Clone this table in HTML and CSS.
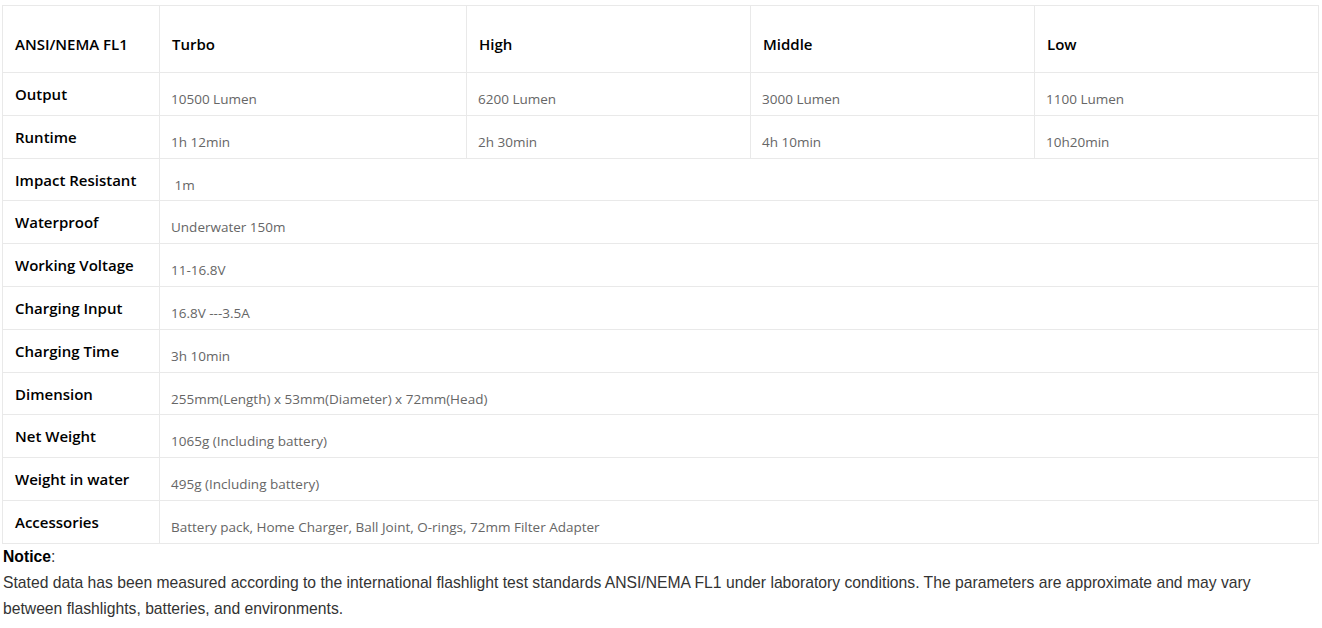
FILE: index.html
```html
<!DOCTYPE html>
<html>
<head>
<meta charset="utf-8">
<link rel="stylesheet" href="styles.css">
</head>
<body>
<div class="page">
  <table class="spec">
    <colgroup>
      <col class="c-label"><col class="c-turbo"><col class="c-mode"><col class="c-mode"><col class="c-mode">
    </colgroup>
    <tr class="head">
      <td class="lbl">ANSI/NEMA FL1</td>
      <td class="lbl">Turbo</td>
      <td class="lbl">High</td>
      <td class="lbl">Middle</td>
      <td class="lbl">Low</td>
    </tr>
    <tr>
      <td class="lbl">Output</td>
      <td class="val">10500 Lumen</td>
      <td class="val">6200 Lumen</td>
      <td class="val">3000 Lumen</td>
      <td class="val">1100 Lumen</td>
    </tr>
    <tr>
      <td class="lbl">Runtime</td>
      <td class="val">1h 12min</td>
      <td class="val">2h 30min</td>
      <td class="val">4h 10min</td>
      <td class="val">10h20min</td>
    </tr>
    <tr>
      <td class="lbl">Impact Resistant</td>
      <td class="val" colspan="4">&nbsp;1m</td>
    </tr>
    <tr>
      <td class="lbl">Waterproof</td>
      <td class="val" colspan="4">Underwater 150m</td>
    </tr>
    <tr>
      <td class="lbl">Working Voltage</td>
      <td class="val" colspan="4">11-16.8V</td>
    </tr>
    <tr>
      <td class="lbl">Charging Input</td>
      <td class="val" colspan="4">16.8V ---3.5A</td>
    </tr>
    <tr>
      <td class="lbl">Charging Time</td>
      <td class="val" colspan="4">3h 10min</td>
    </tr>
    <tr>
      <td class="lbl">Dimension</td>
      <td class="val" colspan="4">255mm(Length) x 53mm(Diameter) x 72mm(Head)</td>
    </tr>
    <tr>
      <td class="lbl">Net Weight</td>
      <td class="val" colspan="4">1065g (Including battery)</td>
    </tr>
    <tr>
      <td class="lbl">Weight in water</td>
      <td class="val" colspan="4">495g (Including battery)</td>
    </tr>
    <tr>
      <td class="lbl">Accessories</td>
      <td class="val" colspan="4">Battery pack, Home Charger, Ball Joint, O-rings, 72mm Filter Adapter</td>
    </tr>
  </table>
  <div class="notice">
    <p><strong>Notice</strong>:</p>
    <p>Stated data has been measured according to the international flashlight test standards ANSI/NEMA FL1 under laboratory conditions. The parameters are approximate and may vary between flashlights, batteries, and environments.</p>
  </div>
</div>
</body>
</html>
```
FILE: styles.css
```css
html, body {
  margin: 0;
  padding: 0;
  background: #fff;
}
.page {
  padding: 5px 0 0 2px;
  width: 1317px;
}
.spec {
  border-collapse: collapse;
  table-layout: fixed;
  width: 1317px;
  font-family: "Open Sans", sans-serif;
}
.c-label { width: 157px; }
.c-turbo { width: 307px; }
.c-mode { width: 284px; }
.spec td {
  border: 1px solid #e9e9e9;
  padding: 0 11px 0 12px;
  vertical-align: top;
  box-sizing: border-box;
}
.spec tr { height: 42.8px; }
.spec tr.head { height: 67px; }
.lbl {
  font-size: 15px;
  font-weight: 600;
  color: #000;
  line-height: 20px;
  padding-top: 11px !important;
}
.head .lbl {
  padding-top: 28px !important;
}
.val {
  font-size: 13.5px;
  color: #666;
  line-height: 18px;
  padding-top: 17px !important;
  padding-left: 11px !important;
}
.notice {
  font-family: "Liberation Sans", Arial, sans-serif;
  font-size: 15.7px;
  line-height: 26px;
  color: #333;
  max-width: 1290px;
}
.notice p {
  margin: 0;
  padding-left: 1px;
}
.notice strong {
  color: #000;
}
```
